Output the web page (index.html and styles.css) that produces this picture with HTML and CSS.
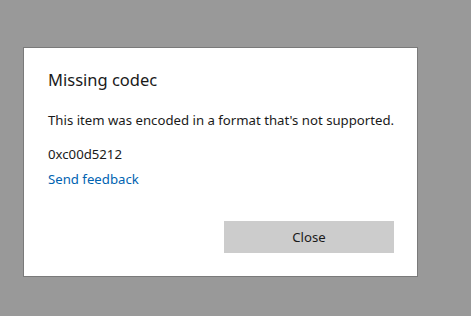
FILE: index.html
```html
<!DOCTYPE html>
<html lang="en">
<head>
    <meta charset="UTF-8">
    <title>Missing codec</title>
    <link rel="stylesheet" href="styles.css">
</head>
<body>
    <!-- Error dialog -->
    <div class="dialog">
        <h1 class="title">Missing codec</h1>
        <p class="message">This item was encoded in a format that's not supported.</p>
        <p class="code">0xc00d5212</p>
        <a class="feedback" href="#">Send feedback</a>

        <div class="button-row">
            <button class="close-btn" type="button">Close</button>
        </div>
    </div>
</body>
</html>
```

FILE: styles.css
```css
body {
    font-family: 'Noto Sans', sans-serif;
    background-color: #999999;
    margin: 0;
    padding: 47px 0 0 23px;
}

.dialog {
    box-sizing: border-box;
    width: 395px;
    height: 230px;
    background-color: #fff;
    border: 1px solid #7a7a7a;
    padding: 0 23px 0 24px;
    display: flex;
    flex-direction: column;
}

.title {
    font-size: 16.5px;
    font-weight: normal;
    color: #1a1a1a;
    margin: 20px 0 0;
    line-height: 24px;
}

.message {
    font-size: 13.2px;
    color: #1a1a1a;
    margin: 18px 0 0;
    line-height: 20px;
    white-space: nowrap;
}

.code {
    font-size: 13.2px;
    color: #1a1a1a;
    margin: 14px 0 0;
    line-height: 20px;
}

.feedback {
    font-size: 13.2px;
    color: #0063b1;
    text-decoration: none;
    margin-top: 5px;
    line-height: 20px;
    align-self: flex-start;
}

.button-row {
    display: flex;
    justify-content: flex-end;
    margin-top: 32px;
}

.close-btn {
    width: 170px;
    height: 32px;
    background-color: #cccccc;
    border: none;
    font-family: 'Noto Sans', sans-serif;
    font-size: 13.2px;
    color: #1a1a1a;
}
```
